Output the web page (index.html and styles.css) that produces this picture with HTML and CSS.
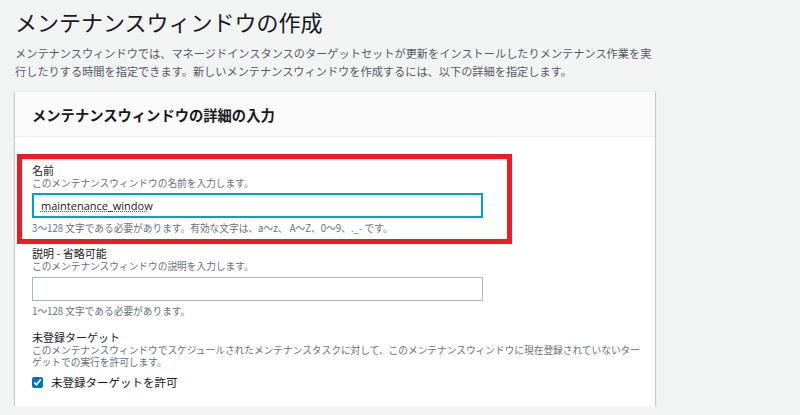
FILE: index.html
```html
<!DOCTYPE html>
<html lang="ja">
<head>
  <meta charset="UTF-8">
  <meta name="viewport" content="width=device-width, initial-scale=1.0">
  <title>メンテナンスウィンドウの作成</title>
  <link rel="stylesheet" href="styles.css">
</head>
<body>
  <div class="page">
    <h1 class="page-title">メンテナンスウィンドウの作成</h1>
    <p class="page-desc">メンテナンスウィンドウでは、マネージドインスタンスのターゲットセットが更新をインストールしたりメンテナンス作業を実行したりする時間を指定できます。新しいメンテナンスウィンドウを作成するには、以下の詳細を指定します。</p>

    <div class="panel">
      <div class="panel-header">
        <h2>メンテナンスウィンドウの詳細の入力</h2>
      </div>
      <div class="panel-body">
        <div class="field highlight">
          <label class="field-label" for="mwName">名前</label>
          <div class="field-desc">このメンテナンスウィンドウの名前を入力します。</div>
          <input class="text-input focused" id="mwName" type="text" value="maintenance_window">
          <div class="field-hint">3〜128 文字である必要があります。有効な文字は、a〜z、 A〜Z、0〜9、._- です。</div>
        </div>

        <div class="field">
          <label class="field-label" for="mwDesc">説明 - 省略可能</label>
          <div class="field-desc">このメンテナンスウィンドウの説明を入力します。</div>
          <input class="text-input" id="mwDesc" type="text">
          <div class="field-hint">1〜128 文字である必要があります。</div>
        </div>

        <div class="field last">
          <div class="field-label">未登録ターゲット</div>
          <div class="field-desc">このメンテナンスウィンドウでスケジュールされたメンテナンスタスクに対して、このメンテナンスウィンドウに現在登録されていないターゲットでの実行を許可します。</div>
          <label class="check-row">
            <input type="checkbox" checked>
            <span>未登録ターゲットを許可</span>
          </label>
        </div>
      </div>
    </div>
  </div>
</body>
</html>
```

FILE: styles.css
```css
body {
  margin: 0;
  background: #f2f3f3;
  color: #16191f;
  font-family: "Noto Sans CJK JP", "Noto Sans", sans-serif;
}
.page {
  padding: 6px 145px 0 15px;
}
.page-title {
  margin: 0;
  font-size: 22px;
  font-weight: 400;
  line-height: 30px;
  color: #16191f;
}
.page-desc {
  margin: 8px 0 11px;
  max-width: 645px;
  font-size: 11.2px;
  line-height: 18px;
  color: #545b64;
}
.panel {
  background: #fff;
  border-top: 1px solid #eaeded;
  box-shadow: 0 1px 1px 0 rgba(0, 28, 36, 0.3), 1px 1px 1px 0 rgba(0, 28, 36, 0.15), -1px 1px 1px 0 rgba(0, 28, 36, 0.15);
}
.panel-header {
  background: #fafafa;
  border-bottom: 1px solid #eaeded;
  height: 44px;
  display: flex;
  align-items: center;
  padding: 0 17px;
}
.panel-header h2 {
  margin: 0;
  font-size: 14.3px;
  font-weight: 700;
  color: #16191f;
}
.panel-body {
  padding: 17px 10px 17px 17px;
}
.field {
  display: flex;
  flex-direction: column;
  align-items: flex-start;
  margin-bottom: 13px;
}
.field.last {
  margin-bottom: 0;
}
.highlight {
  width: fit-content;
  margin: 0 0 2px -15px;
  padding: 4px 24px 5px 10px;
  border: 5px solid #ed1c24;
}
.field-label {
  font-size: 11px;
  line-height: 14px;
  color: #16191f;
}
.field-desc {
  font-size: 9.7px;
  line-height: 12px;
  color: #687078;
}
.field-hint {
  margin-top: 4px;
  font-size: 9.7px;
  line-height: 12px;
  color: #687078;
}
.text-input {
  box-sizing: border-box;
  width: 451px;
  height: 24px;
  margin: 5px 0 0;
  padding: 0 7px;
  border: 1px solid #aab7b8;
  border-radius: 0;
  background: #fff;
  font-family: "Open Sans", "Noto Sans", sans-serif;
  font-size: 11px;
  color: #16191f;
  outline: none;
}
/* spellcheck squiggle under the typed value */
.text-input.focused {
  height: 25px;
  margin-top: 4px;
  border: 2px solid #00a1c9;
  background-image: repeating-linear-gradient(90deg, #e0282e 0 1px, transparent 1px 2px);
  background-size: 108px 1px;
  background-position: 6px 16px;
  background-repeat: no-repeat;
}
.check-row {
  display: flex;
  align-items: center;
  gap: 8px;
  margin-top: 7px;
  font-size: 11.5px;
  line-height: 14px;
  color: #16191f;
}
.check-row input {
  width: 11px;
  height: 11px;
  margin: 0;
  accent-color: #0073bb;
}
```
